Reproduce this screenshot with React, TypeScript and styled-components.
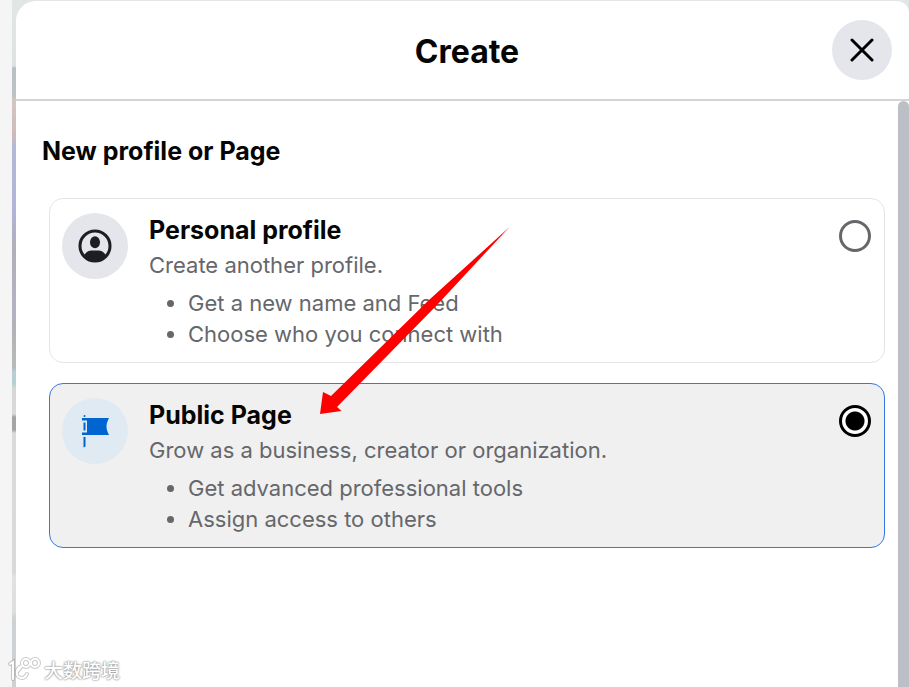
import React, { useState } from "react";
import styled, { createGlobalStyle } from "styled-components";

const GlobalStyle = createGlobalStyle`
  *, *::before, *::after { box-sizing: border-box; }
  body {
    margin: 0;
    background: #f5f5f5;
    color: #050505;
    font-family: Inter, "Liberation Sans", "Noto Sans CJK SC", sans-serif;
  }
`;

const Screen = styled.div`
  position: relative;
  display: flex;
  min-height: 100vh;
  padding-left: 12px;
  overflow: hidden;
`;

const Backdrop = styled.div`
  flex: 1;
  display: flex;
  padding: 1px 0 0 4px;
  background: linear-gradient(
    to bottom,
    #e3e6e6 0,
    #dfe2e2 66px,
    #b9c0c1 68px,
    #bdc3c4 96px,
    #d3c6c0 100px,
    #cdb9be 138px,
    #b4b9d6 146px,
    #b2b4d8 210px,
    #b0b0b8 250px,
    #b2b2c6 310px,
    #b2b3b5 330px,
    #b7babb 368px,
    #b5cfd3 372px,
    #b5cfd3 384px,
    #d6d6d6 388px,
    #dadada 414px,
    #a5a5a5 417px,
    #a5a5a5 430px,
    #dadada 433px,
    #d8dada 573px,
    #e0e1e1 576px,
    #dddede 612px,
    #cfd2d4 618px,
    #cfd2d4 100%
  );
`;

const Dialog = styled.section`
  flex: 1;
  min-width: 0;
  display: flex;
  flex-direction: column;
  overflow: hidden;
  border-radius: 20px 12px 0 0;
  background: #fff;
`;

const Header = styled.header`
  display: grid;
  grid-template-columns: 60px 1fr 60px;
  align-items: center;
  height: 100px;
  flex: none;
  padding: 0 17px 0 26px;
  border-bottom: 2px solid #d2d5d8;
`;

const Title = styled.h1`
  grid-column: 2;
  margin: 0;
  padding-top: 4px;
  font-size: 32px;
  line-height: 40px;
  font-weight: 700;
  text-align: center;
`;

const CloseButton = styled.button`
  display: grid;
  place-items: center;
  width: 60px;
  height: 60px;
  padding: 0;
  border: 0;
  border-radius: 50%;
  background: #e4e6eb;
  color: #000;
  cursor: pointer;
`;

const Body = styled.div`
  flex: 1;
  display: flex;
`;

const Content = styled.form`
  flex: 1;
  min-width: 0;
  padding: 32px 13px 32px 33px;
`;

const ScrollThumb = styled.div`
  width: 11px;
  flex: none;
  border-radius: 6px 6px 0 0;
  background: #bcc0c6;
`;

const Heading = styled.h2`
  margin: 0 0 29px -7px;
  font-size: 25px;
  line-height: 36px;
  font-weight: 700;
`;

const Options = styled.div`
  display: grid;
  gap: 20px;
`;

const Card = styled.label<{ $selected: boolean }>`
  display: flex;
  align-items: flex-start;
  padding: 14px 13px 12px 12px;
  border: 1px solid ${(p) => (p.$selected ? "#3578e5" : "#e4e5e7")};
  border-radius: 14px;
  background: ${(p) => (p.$selected ? "#f0f0f0" : "#fff")};
  cursor: pointer;
`;

const IconDisc = styled.span<{ $tint: string }>`
  display: grid;
  place-items: center;
  flex: none;
  width: 66px;
  height: 66px;
  margin-right: 21px;
  border-radius: 50%;
  background: ${(p) => p.$tint};
`;

const CardText = styled.div`
  flex: 1;
  min-width: 0;
  color: #65676b;
  font-size: 22px;
  line-height: 31px;
`;

const CardTitle = styled.div`
  color: #050505;
  font-size: 25px;
  line-height: 34px;
  font-weight: 700;
`;

const CardSummary = styled.div`
  line-height: 36px;
`;

const Points = styled.ul`
  margin: 5px 0 0;
  padding-left: 39px;
`;

const Radio = styled.input`
  appearance: none;
  flex: none;
  width: 32px;
  height: 32px;
  margin: 7px 0 0;
  border: 3px solid #65676b;
  border-radius: 50%;
  cursor: pointer;

  &:checked {
    border-color: #000;
    background: radial-gradient(circle, #000 0 9px, #fff 10px);
  }
`;

const Arrow = styled.svg`
  position: absolute;
  left: 319px;
  top: 226px;
  pointer-events: none;
`;

const Watermark = styled.div`
  position: absolute;
  left: 8px;
  bottom: 4px;
  display: flex;
  align-items: center;
  gap: 3px;
  color: #fff;
  font: 500 19px/26px "Noto Sans CJK SC", sans-serif;
  text-shadow: 0 0 2px #888, 0 0 2px #999;
  pointer-events: none;
`;

const ProfileIcon = () => (
  <svg width="34" height="34" viewBox="0 0 34 34" aria-hidden="true">
    <clipPath id="profile-circle">
      <circle cx="17" cy="17" r="15" />
    </clipPath>
    <g clipPath="url(#profile-circle)" fill="#1c1e21">
      <ellipse cx="17" cy="13.3" rx="5" ry="6" />
      <path d="M5 29C7 23 11 21.5 14 21.5h6c3 0 7 1.5 9 7.5v5H5z" />
    </g>
    <circle cx="17" cy="17" r="15" fill="none" stroke="#1c1e21" strokeWidth="3" />
  </svg>
);

const FlagIcon = () => (
  <svg width="34" height="34" viewBox="0 0 34 34" aria-hidden="true">
    <g fill="#0064d1">
      <circle cx="6.5" cy="2" r="1" />
      <path d="M4 4H31C29.5 7 28.5 9.500 28.500 12.500S29.500 18 31 21H4z" />
      <path d="M5.500 23h2v9.500l-2 1z" />
    </g>
    <path d="M3.500 6.500H9V18.500H3.500z" fill="#e0eaf3" />
    <path d="M5.500 8.500h2v8h-2z" fill="#0064d1" />
  </svg>
);

const CloseIcon = () => (
  <svg width="24" height="24" viewBox="0 0 24 24" aria-hidden="true">
    <path d="M2 2l20 20M22 2L2 22" stroke="currentColor" strokeWidth="3" strokeLinecap="round" />
  </svg>
);

const options = [
  {
    id: "personal",
    title: "Personal profile",
    summary: "Create another profile.",
    points: ["Get a new name and Feed", "Choose who you connect with"],
    tint: "#e4e6eb",
    icon: <ProfileIcon />,
  },
  {
    id: "page",
    title: "Public Page",
    summary: "Grow as a business, creator or organization.",
    points: ["Get advanced professional tools", "Assign access to others"],
    tint: "#e0eaf3",
    icon: <FlagIcon />,
  },
];

export default function App() {
  const [selected, setSelected] = useState("page");
  return (
    <Screen>
      <GlobalStyle />
      <Backdrop>
        <Dialog role="dialog" aria-labelledby="dialog-title">
          <Header>
            <Title id="dialog-title">Create</Title>
            <CloseButton type="button" aria-label="Close">
              <CloseIcon />
            </CloseButton>
          </Header>
          <Body>
            <Content>
              <Heading id="group-title">New profile or Page</Heading>
              <Options role="radiogroup" aria-labelledby="group-title">
                {options.map((o) => (
                  <Card key={o.id} htmlFor={o.id} $selected={selected === o.id}>
                    <IconDisc $tint={o.tint}>{o.icon}</IconDisc>
                    <CardText>
                      <CardTitle>{o.title}</CardTitle>
                      <CardSummary>{o.summary}</CardSummary>
                      <Points>
                        {o.points.map((point) => (
                          <li key={point}>{point}</li>
                        ))}
                      </Points>
                    </CardText>
                    <Radio
                      type="radio"
                      id={o.id}
                      name="kind"
                      checked={selected === o.id}
                      onChange={() => setSelected(o.id)}
                    />
                  </Card>
                ))}
              </Options>
            </Content>
            <ScrollThumb />
          </Body>
        </Dialog>
      </Backdrop>
      <Arrow width="192" height="190" viewBox="0 0 192 190" aria-hidden="true">
        <path d="M190.500 1L110 74 12 170 4 166 1 188 22.500 185 18 181 118 79z" fill="#f00" />
      </Arrow>
      <Watermark>
        <svg width="33" height="26" viewBox="0 0 33 26" fill="none" aria-hidden="true">
          <g stroke="#999" strokeWidth="4" strokeLinecap="round" opacity="0.5">
            <path d="M2 7l3-2v17M14 9c-7 1-7 12 0 12 3 0 4-2 5-4M10 14l3-4" />
            <circle cx="18" cy="6" r="4" />
            <circle cx="27" cy="6" r="4" />
          </g>
          <g stroke="#fff" strokeWidth="2" strokeLinecap="round">
            <path d="M2 7l3-2v17M14 9c-7 1-7 12 0 12 3 0 4-2 5-4M10 14l3-4" />
            <circle cx="18" cy="6" r="4" />
            <circle cx="27" cy="6" r="4" />
          </g>
        </svg>
        <span>大数跨境</span>
      </Watermark>
    </Screen>
  );
}
